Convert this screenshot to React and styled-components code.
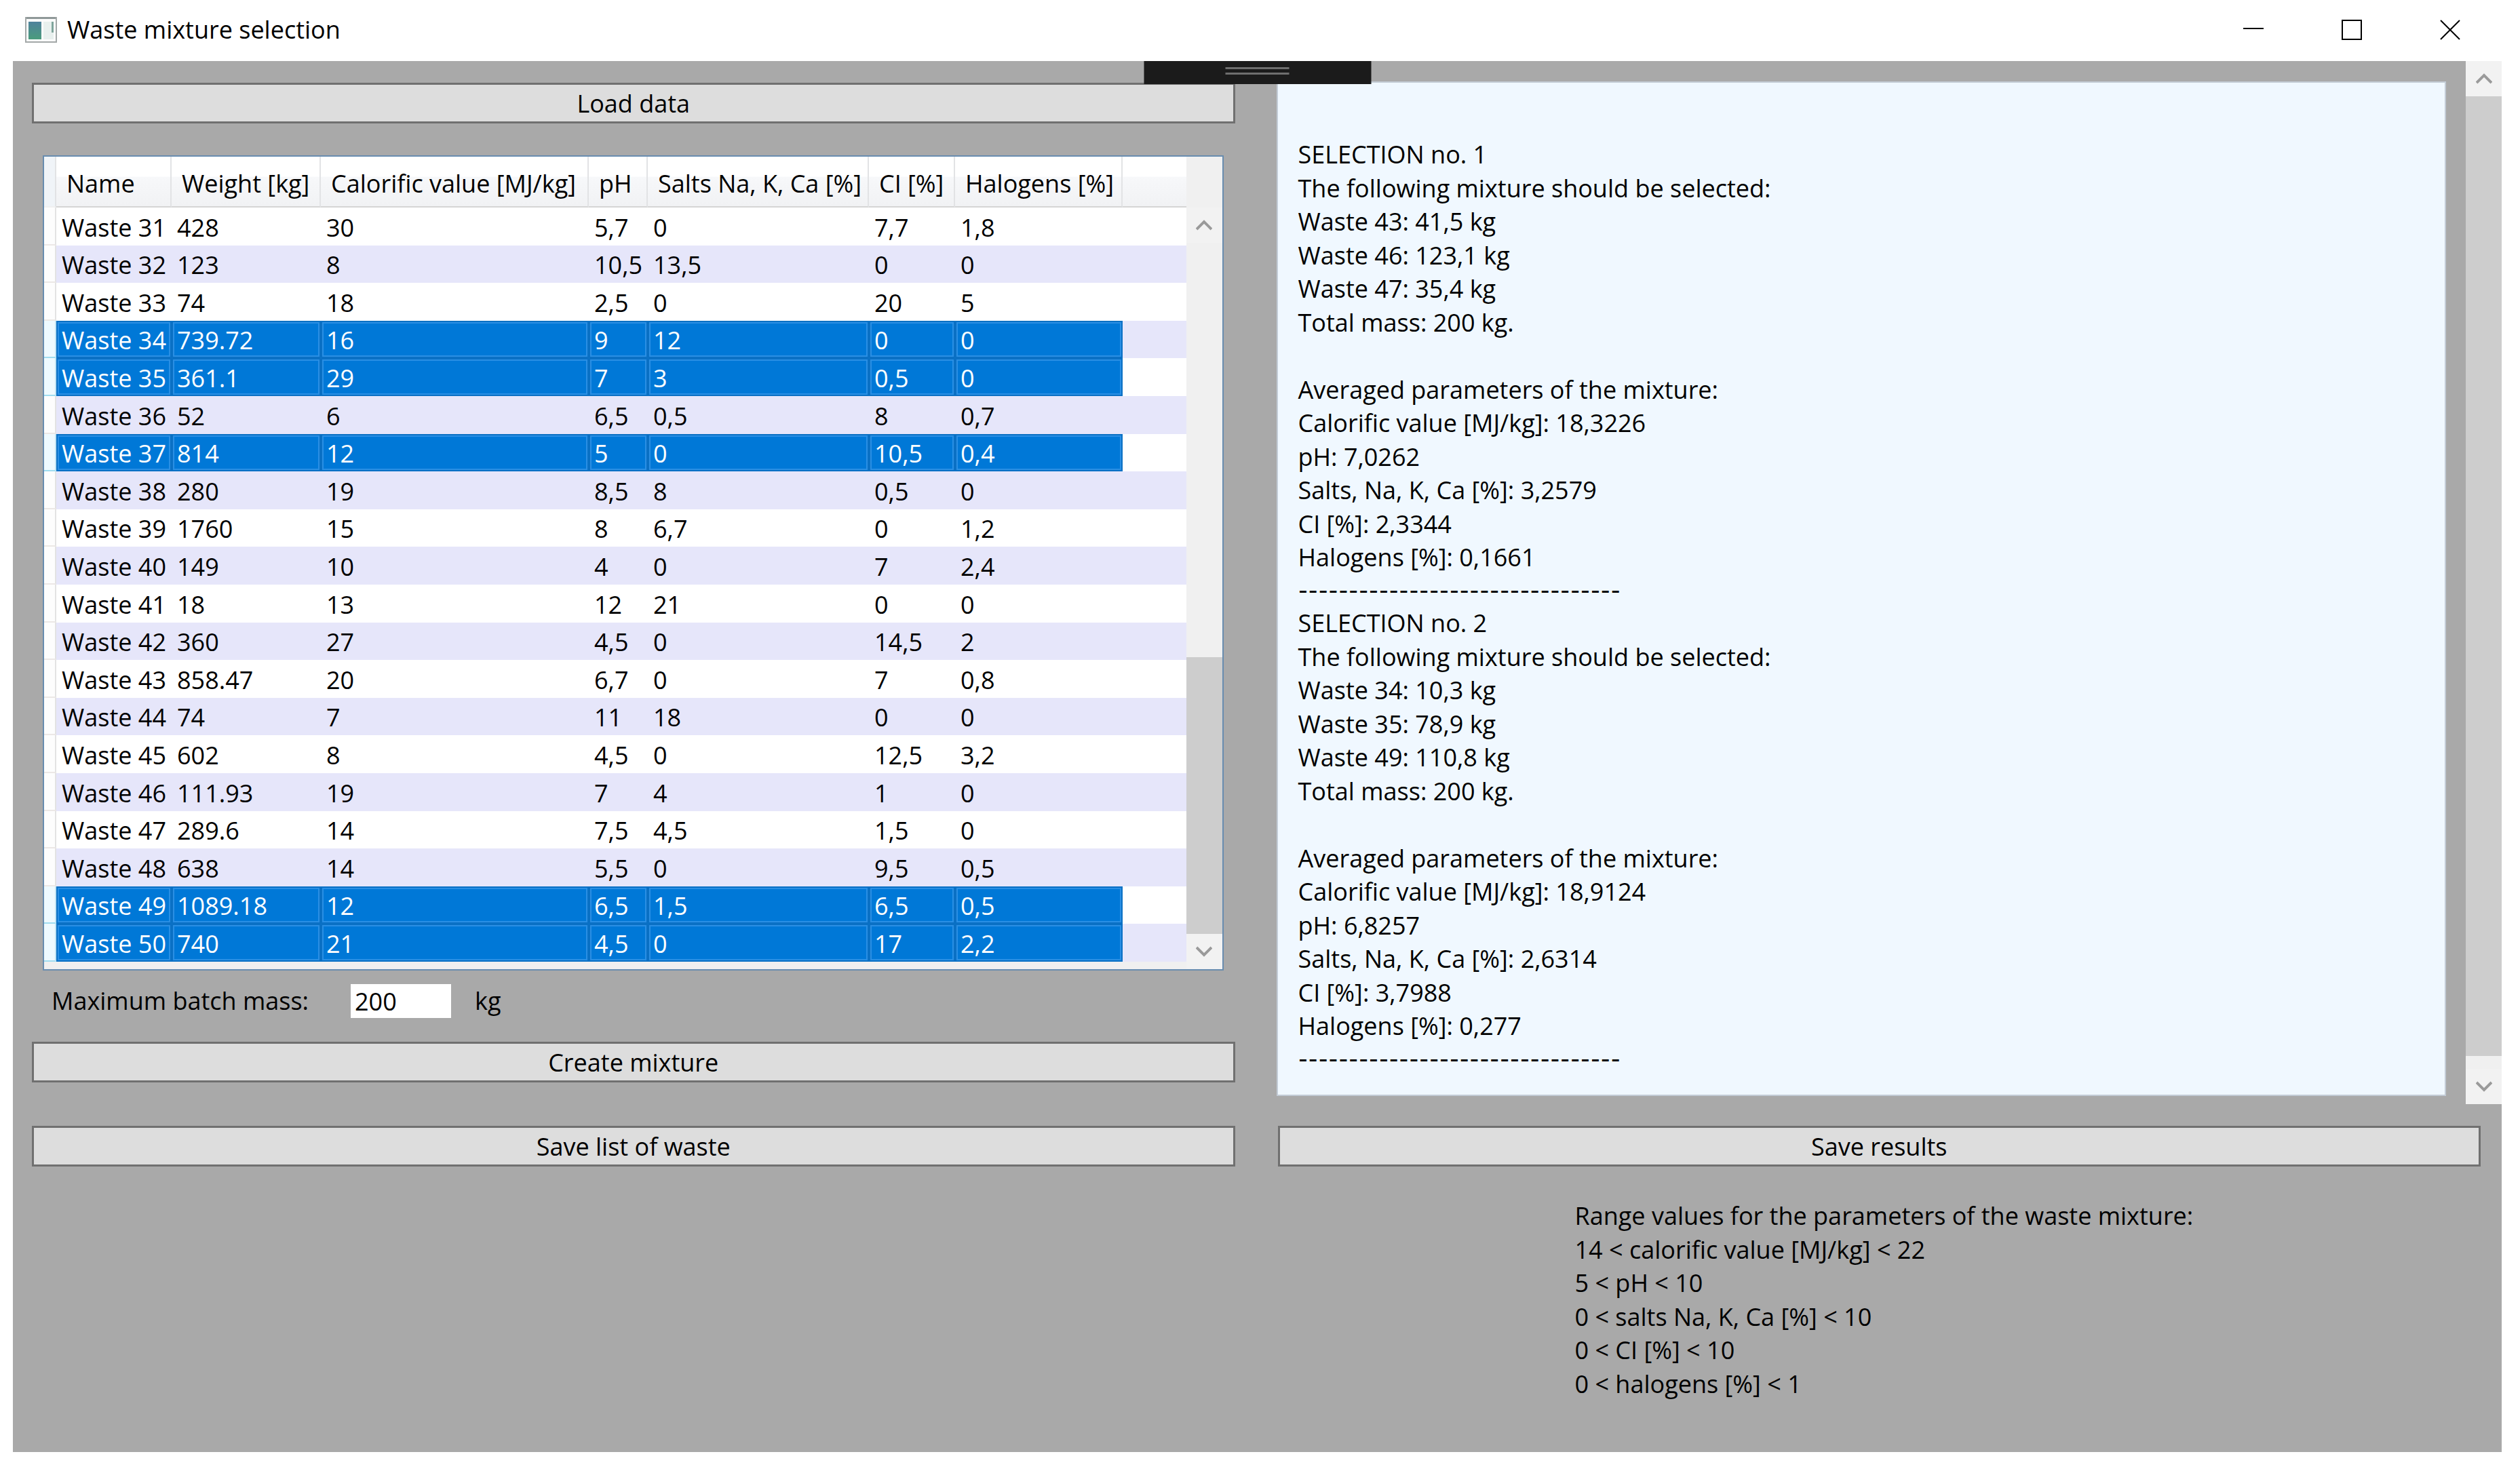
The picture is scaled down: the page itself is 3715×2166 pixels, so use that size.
import React from 'react';
import styled, { createGlobalStyle } from 'styled-components'
//

const GlobalStyle = createGlobalStyle`
  * {
    box-sizing: border-box;
  }

  body {
    margin: 0;
    background: #fff;
    color: #000;
    font-family: 'Open Sans', 'Noto Sans', sans-serif;
    font-size: 36px;
    line-height: 50px;
  }

  button, input {
    font: inherit;
    color: inherit;
  }
`

const Window = styled.div`
  display: flex;
  flex-direction: column;
  min-height: 100vh;
  padding: 0 27px 25px 19px;
`

const TitleBar = styled.header`
  display: flex;
  align-items: center;
  height: 90px;
  padding: 0 4px 3px 18px;
`

const Title = styled.h1`
  flex: 1;
  margin: 0 0 0 15px;
  font-size: 36px;
  font-weight: 400;
`

const WindowButton = styled.button`
  display: flex;
  align-items: center;
  justify-content: center;
  width: 145px;
  height: 86px;
  padding: 0;
  border: none;
  background: none;
`

const Client = styled.main`
  position: relative;
  flex: 1;
  display: grid;
  grid-template-columns: 1fr 1fr;
  grid-template-rows: auto 1fr;
  background: #a9a9a9;
`

const DebugHandle = styled.div`
  position: absolute;
  top: 0;
  left: 50%;
  transform: translateX(-50%);
  display: flex;
  justify-content: center;
  width: 335px;
  height: 34px;
  padding-top: 9px;
  background: #1b1b1b;
`

const Grip = styled.span`
  width: 94px;
  height: 11px;
  border-top: 3px solid #6e6e6e;
  border-bottom: 3px solid #6e6e6e;
`

const Panel = styled.section`
  display: flex;
  flex-direction: column;
  padding: 32px 33px 32px 28px;
`

const Footer = styled.section`
  display: flex;
  flex-direction: column;
  padding: ${props => (props.$right ? '32px 31px 32px 30px' : '32px 33px 32px 28px')};
`

const Button = styled.button`
  width: 100%;
  height: 60px;
  padding: 2px 0 0;
  border: 3px solid #707070;
  background: #dddddd;
  line-height: 50px;
`

const DataGrid = styled.div`
  display: flex;
  margin: 47px 17px 20px 16px;
  border: 2px solid #688caf;
  background: #f0f0f0;
`

const Table = styled.table`
  flex: 1;
  width: 100%;
  margin-bottom: 11px;
  border-collapse: separate;
  border-spacing: 0;
  table-layout: fixed;
`

const HeadCell = styled.th`
  height: 75px;
  padding: 7px 0 0 15px;
  border-right: 2px solid #e2e3e5;
  border-bottom: 2px solid #d5d5d5;
  background: linear-gradient(#ffffff 40%, #f7f8fa 41%, #f1f2f4);
  font-weight: 400;
  text-align: left;
  white-space: nowrap;

  &:first-child {
    padding: 0;
    background: #f0f4f8;
    border-bottom-color: #f0f0f0;
  }

  &:last-child {
    padding: 0;
    border-right: none;
  }
`

const Row = styled.tr`
  height: 56px;
  background: #fff;

  &:nth-child(5n + 2), &:nth-child(5n + 4) {
    height: 55px;
  }

  &:nth-child(even) {
    background: #e6e6fa;
  }
`

const Cell = styled.td`
  padding: 3px 0 0 8px;
  white-space: nowrap;
  ${props => props.$selected && `
    background: #0078d7;
    box-shadow: inset 0 0 0 2px #0a70c4, inset 0 0 0 4px #2a8fe4;
    color: #fff;
  `}
`

const RowHeader = styled.td`
  padding: 0;
  border-right: 2px solid ${props => (props.$selected ? '#bfe3f3' : '#e3e3e3')};
  border-bottom: 2px solid ${props => (props.$selected ? '#9fdcf0' : '#ece8e6')};
  background: ${props => (props.$selected ? '#eefaff' : '#fdfdfd')};
`

const Filler = styled.td`
  padding: 0;
`

const ScrollBar = styled.div`
  flex: none;
  display: flex;
  flex-direction: column;
  width: 53px;
  padding-top: ${props => (props.$offset ? '75px' : '0')};
  background: #f0f0f0;
`

const ScrollButton = styled.button`
  display: flex;
  align-items: center;
  justify-content: center;
  height: 52px;
  padding: 0;
  border: none;
  background: #f2f2f2;
`

const Track = styled.div`
  flex: ${props => props.$grow} 1 0;
`

const Thumb = styled(Track)`
  background: #cdcdcd;
`

const MassRow = styled.div`
  display: flex;
  align-items: center;
  margin-bottom: 35px;
  padding-left: 29px;
`

const MassLabel = styled.label`
  width: 441px;
`

const MassInput = styled.input`
  width: 148px;
  height: 50px;
  margin-right: 35px;
  padding: 2px 6px 0;
  border: none;
  background: #fff;
`

const ResultScroll = styled.section`
  display: flex;
`

const Results = styled.output`
  flex: 1;
  margin: 30px 29px 12px 28px;
  padding: 81px 29px 0 30px;
  border: 2px solid #c3ccd6;
  background: #f0f8ff;
`

const Line = styled.div`
  height: 49px;
  white-space: pre;

  &:nth-child(odd) {
    height: 50px;
  }
`

const Dashes = styled(Line)`
  font-family: Lato, sans-serif;
  font-size: 40px;
  line-height: 47px;

  &&:nth-child(n) {
    height: 47px;
  }
`

const Ranges = styled.div`
  margin: 48px 0 0 438px;
`

const columns = [
  ['Name', 170],
  ['Weight [kg]', 220],
  ['Calorific value [MJ/kg]', 395],
  ['pH', 87],
  ['Salts Na, K, Ca [%]', 326],
  ['CI [%]', 127],
  ['Halogens [%]', 247],
]

const wastes = [
  ['Waste 31', '428', '30', '5,7', '0', '7,7', '1,8'],
  ['Waste 32', '123', '8', '10,5', '13,5', '0', '0'],
  ['Waste 33', '74', '18', '2,5', '0', '20', '5'],
  ['Waste 34', '739.72', '16', '9', '12', '0', '0'],
  ['Waste 35', '361.1', '29', '7', '3', '0,5', '0'],
  ['Waste 36', '52', '6', '6,5', '0,5', '8', '0,7'],
  ['Waste 37', '814', '12', '5', '0', '10,5', '0,4'],
  ['Waste 38', '280', '19', '8,5', '8', '0,5', '0'],
  ['Waste 39', '1760', '15', '8', '6,7', '0', '1,2'],
  ['Waste 40', '149', '10', '4', '0', '7', '2,4'],
  ['Waste 41', '18', '13', '12', '21', '0', '0'],
  ['Waste 42', '360', '27', '4,5', '0', '14,5', '2'],
  ['Waste 43', '858.47', '20', '6,7', '0', '7', '0,8'],
  ['Waste 44', '74', '7', '11', '18', '0', '0'],
  ['Waste 45', '602', '8', '4,5', '0', '12,5', '3,2'],
  ['Waste 46', '111.93', '19', '7', '4', '1', '0'],
  ['Waste 47', '289.6', '14', '7,5', '4,5', '1,5', '0'],
  ['Waste 48', '638', '14', '5,5', '0', '9,5', '0,5'],
  ['Waste 49', '1089.18', '12', '6,5', '1,5', '6,5', '0,5'],
  ['Waste 50', '740', '21', '4,5', '0', '17', '2,2'],
]

const selected = ['Waste 34', 'Waste 35', 'Waste 37', 'Waste 49', 'Waste 50']

const selections = [
  [
    'SELECTION no. 1',
    'The following mixture should be selected:',
    'Waste 43: 41,5 kg',
    'Waste 46: 123,1 kg',
    'Waste 47: 35,4 kg',
    'Total mass: 200 kg.',
    '',
    'Averaged parameters of the mixture:',
    'Calorific value [MJ/kg]: 18,3226',
    'pH: 7,0262',
    'Salts, Na, K, Ca [%]: 3,2579',
    'CI [%]: 2,3344',
    'Halogens [%]: 0,1661',
  ],
  [
    'SELECTION no. 2',
    'The following mixture should be selected:',
    'Waste 34: 10,3 kg',
    'Waste 35: 78,9 kg',
    'Waste 49: 110,8 kg',
    'Total mass: 200 kg.',
    '',
    'Averaged parameters of the mixture:',
    'Calorific value [MJ/kg]: 18,9124',
    'pH: 6,8257',
    'Salts, Na, K, Ca [%]: 2,6314',
    'CI [%]: 3,7988',
    'Halogens [%]: 0,277',
  ],
]

const ranges = [
  'Range values for the parameters of the waste mixture:',
  '14 < calorific value [MJ/kg] < 22',
  '5 < pH < 10',
  '0 < salts Na, K, Ca [%] < 10',
  '0 < CI [%] < 10',
  '0 < halogens [%] < 1',
]

function AppIcon() {
  return (
    <svg width="47" height="38" viewBox="0 0 47 38" aria-hidden="true">
      <defs>
        <linearGradient id="pane" x1="0" y1="0" x2="0" y2="1">
          <stop offset="0" stopColor="#4f829c" />
          <stop offset="1" stopColor="#4a9c7c" />
        </linearGradient>
      </defs>
      <rect x="1" y="1" width="45" height="36" fill="#fbfbfb" stroke="#a3a8a8" strokeWidth="2" />
      <rect x="2" y="0" width="43" height="3" fill="#8f9898" />
      <rect x="5" y="7" width="19" height="26" fill="url(#pane)" />
      <rect x="27" y="7" width="15" height="26" fill="#e8f0ee" />
      <rect x="39" y="7" width="3" height="16" fill="#7fa59c" />
    </svg>
  )
}

function Chevron({ down }) {
  return (
    <svg width="24" height="16" viewBox="0 0 24 16" fill="none" stroke="#9a9a9a" strokeWidth="4" aria-hidden="true">
      <path d={down ? 'M1 2L12 13L23 2' : 'M1 14L12 3L23 14'} />
    </svg>
  )
}

function App() {
  return (
    <Window>
      <GlobalStyle />
      <TitleBar>
        <AppIcon />
        <Title>Waste mixture selection</Title>
        <WindowButton aria-label="Minimize">
          <svg width="30" height="30" stroke="#000" strokeWidth="2"><path d="M0 13H30" /></svg>
        </WindowButton>
        <WindowButton aria-label="Maximize">
          <svg width="30" height="30" fill="none" stroke="#000" strokeWidth="2"><rect x="1" y="1" width="28" height="28" /></svg>
        </WindowButton>
        <WindowButton aria-label="Close">
          <svg width="30" height="30" stroke="#000" strokeWidth="2"><path d="M1 1L29 29M29 1L1 29" /></svg>
        </WindowButton>
      </TitleBar>
      <Client>
        <Panel>
          <Button>Load data</Button>
          <DataGrid>
            <Table>
              <colgroup>
                <col width="18" />
                {columns.map(([name, width]) => <col key={name} width={width} />)}
                <col />
              </colgroup>
              <thead>
                <tr>
                  <HeadCell />
                  {columns.map(([name]) => <HeadCell key={name}>{name}</HeadCell>)}
                  <HeadCell />
                </tr>
              </thead>
              <tbody>
                {wastes.map(waste => {
                  const isSelected = selected.includes(waste[0])
                  return (
                    <Row key={waste[0]}>
                      <RowHeader $selected={isSelected} />
                      {waste.map((value, i) => <Cell key={i} $selected={isSelected}>{value}</Cell>)}
                      <Filler />
                    </Row>
                  )
                })}
              </tbody>
            </Table>
            <ScrollBar $offset>
              <ScrollButton aria-label="Scroll up"><Chevron /></ScrollButton>
              <Track $grow={3} />
              <Thumb $grow={2} />
              <ScrollButton aria-label="Scroll down"><Chevron down /></ScrollButton>
            </ScrollBar>
          </DataGrid>
          <MassRow>
            <MassLabel htmlFor="mass">Maximum batch mass:</MassLabel>
            <MassInput id="mass" defaultValue="200" />
            <span>kg</span>
          </MassRow>
          <Button>Create mixture</Button>
        </Panel>
        <ResultScroll>
          <Results>
            {selections.map(lines => (
              <div key={lines[0]}>
                {lines.map((line, i) => <Line key={i}>{line}</Line>)}
                <Dashes>--------------------------------</Dashes>
              </div>
            ))}
          </Results>
          <ScrollBar>
            <ScrollButton aria-label="Scroll up"><Chevron /></ScrollButton>
            <Thumb $grow={75} />
            <Track $grow={1} />
            <ScrollButton aria-label="Scroll down"><Chevron down /></ScrollButton>
          </ScrollBar>
        </ResultScroll>
        <Footer>
          <Button>Save list of waste</Button>
        </Footer>
        <Footer $right>
          <Button>Save results</Button>
          <Ranges>
            {ranges.map(line => <Line key={line}>{line}</Line>)}
          </Ranges>
        </Footer>
        <DebugHandle>
          <Grip />
        </DebugHandle>
      </Client>
    </Window>
  );
}

export default App;
